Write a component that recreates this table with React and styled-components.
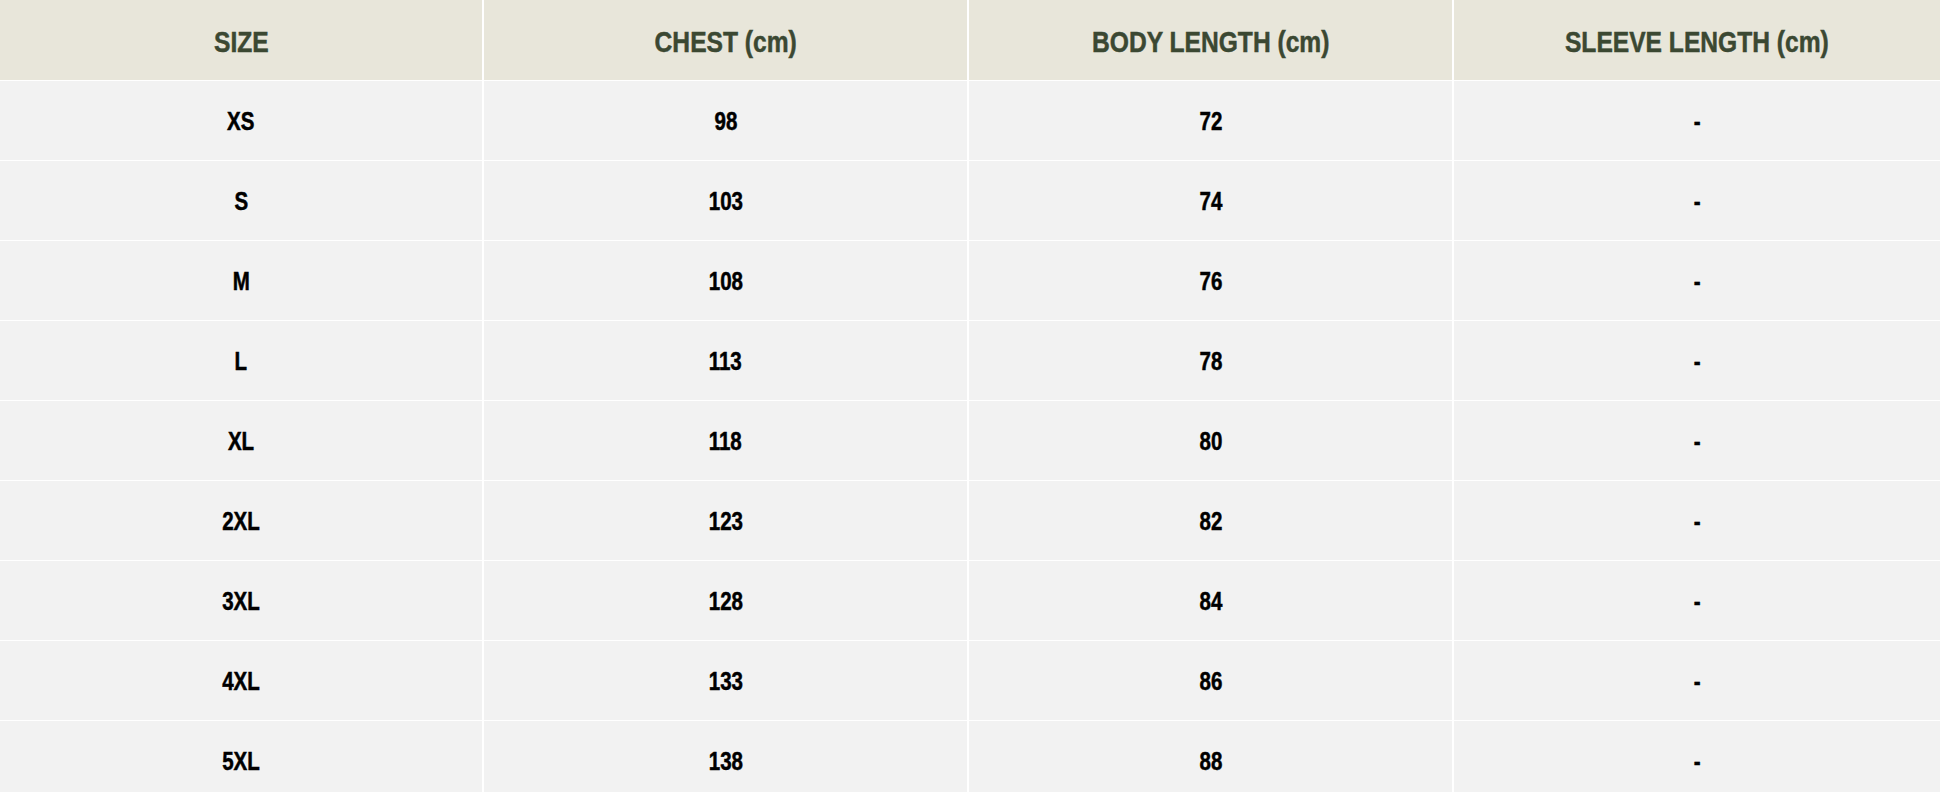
import React from 'react';
import styled, {createGlobalStyle} from 'styled-components';

const GlobalStyle = createGlobalStyle`
  html, body {
    margin: 0;
    padding: 0;
    overflow: hidden;
    background: #ffffff;
  }
`;

const Table = styled.div`
  background: #ffffff;
  display: grid;
  font-family: "Liberation Sans", Arial, sans-serif;
  font-weight: 700;
  row-gap: 1px;
  width: 100%;
`;

const Row = styled.div`
  column-gap: 2px;
  display: grid;
  grid-template-columns: 482px 483px 483px 1fr;
  height: ${props => props.header ? '80px' : '79px'};
  padding-right: 1px;
`;

const Cell = styled.div`
  align-items: center;
  background: ${props => props.header ? '#e8e6da' : '#f2f2f2'};
  color: ${props => props.header ? '#3b4832' : '#000000'};
  display: flex;
  font-size: ${props => props.header ? '30px' : '25px'};
  justify-content: center;
  padding-top: ${props => props.header ? '4px' : '1px'};
`;

/* the original face is a condensed DIN; squeeze Arial-metrics to its width */
const Label = styled.span`
  -webkit-text-stroke: 0.5px currentColor;
  display: inline-block;
  transform: scaleX(0.82);
  white-space: nowrap;
`;

const columns = ['SIZE', 'CHEST (cm)', 'BODY LENGTH (cm)', 'SLEEVE LENGTH (cm)'];

const rows = [
  ['XS', '98', '72', '-'],
  ['S', '103', '74', '-'],
  ['M', '108', '76', '-'],
  ['L', '113', '78', '-'],
  ['XL', '118', '80', '-'],
  ['2XL', '123', '82', '-'],
  ['3XL', '128', '84', '-'],
  ['4XL', '133', '86', '-'],
  ['5XL', '138', '88', '-']
];

export default function App() {
  return (
    <>
      <GlobalStyle />
      <Table>
        <Row header>
          {columns.map(c => <Cell header key={c}><Label>{c}</Label></Cell>)}
        </Row>
        {rows.map(r => (
          <Row key={r[0]}>
            {r.map((v, i) => <Cell key={i}><Label>{v}</Label></Cell>)}
          </Row>
        ))}
      </Table>
    </>
  );
}
